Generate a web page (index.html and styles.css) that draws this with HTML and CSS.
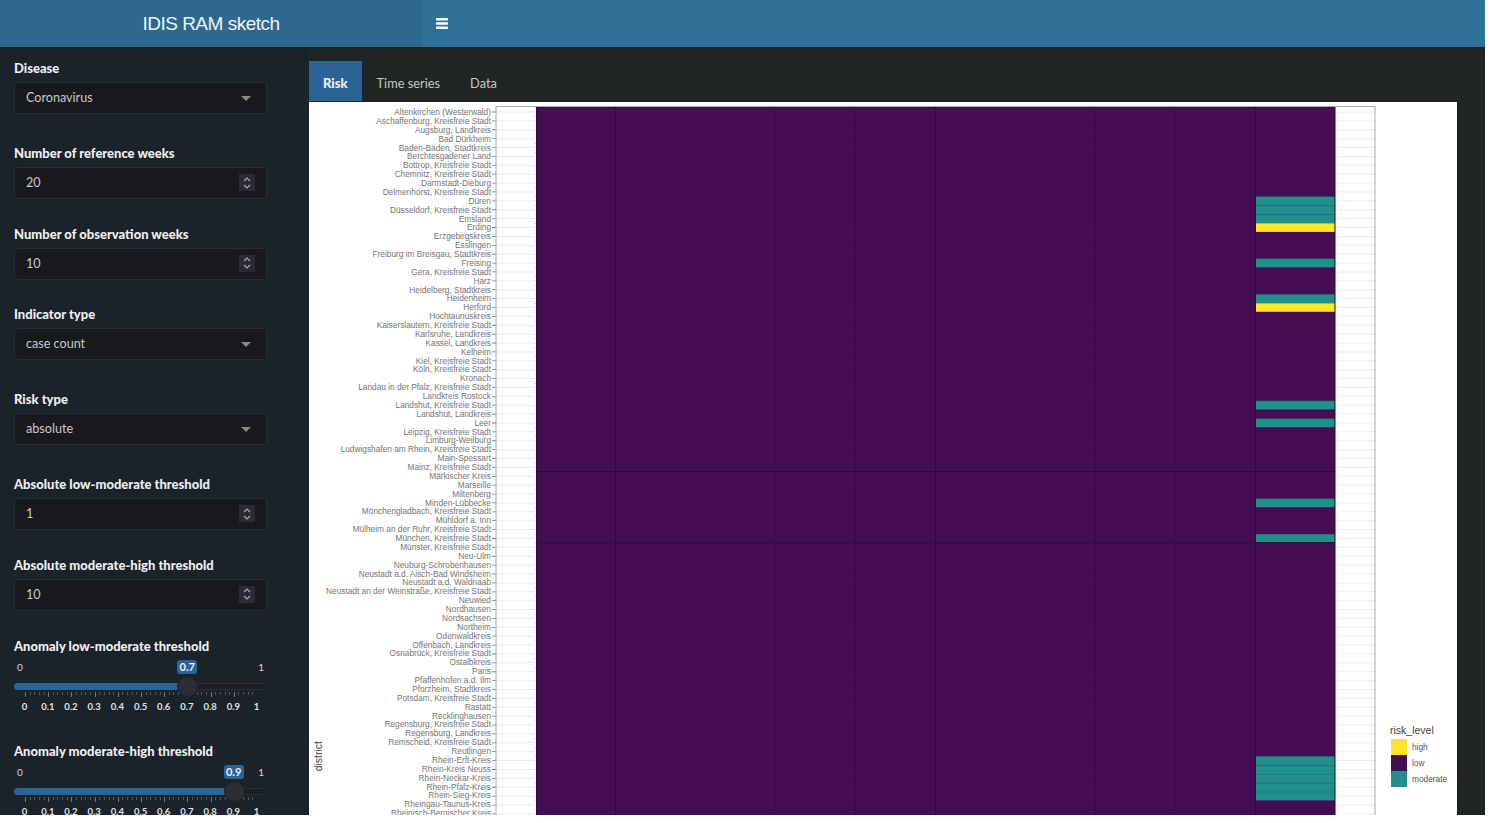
FILE: index.html
```html
<!DOCTYPE html>
<html lang="en">

<head>
    <meta charset="UTF-8">
    <meta name="viewport" content="width=device-width, initial-scale=1.0">
    <title>IDIS RAM sketch</title>
    <link rel="stylesheet" href="styles.css">
</head>

<body>
    <div class="app">
        <header class="topbar">
            <div class="logo">IDIS RAM sketch</div>
            <div class="toggle">
                <svg width="12" height="11" viewBox="0 0 12 11">
                    <rect y="0" width="12" height="2.4" rx="0.6" fill="#fff"/>
                    <rect y="4.3" width="12" height="2.4" rx="0.6" fill="#fff"/>
                    <rect y="8.6" width="12" height="2.4" rx="0.6" fill="#fff"/>
                </svg>
            </div>
        </header>

        <div class="layout">
            <aside class="sidebar">
                <div class="field field-select">
                    <label>Disease</label>
                    <div class="control">Coronavirus<span class="caret"></span></div>
                </div>
                <div class="field">
                    <label>Number of reference weeks</label>
                    <div class="control">20
                        <span class="spinner"><svg width="10" height="14" viewBox="0 0 10 14"><path d="M2 5l3-3 3 3M2 9l3 3 3-3" fill="none" stroke="#a9a9ad" stroke-width="1.2"/></svg></span>
                    </div>
                </div>
                <div class="field">
                    <label>Number of observation weeks</label>
                    <div class="control">10
                        <span class="spinner"><svg width="10" height="14" viewBox="0 0 10 14"><path d="M2 5l3-3 3 3M2 9l3 3 3-3" fill="none" stroke="#a9a9ad" stroke-width="1.2"/></svg></span>
                    </div>
                </div>
                <div class="field field-select">
                    <label>Indicator type</label>
                    <div class="control">case count<span class="caret"></span></div>
                </div>
                <div class="field field-select">
                    <label>Risk type</label>
                    <div class="control">absolute<span class="caret"></span></div>
                </div>
                <div class="field">
                    <label>Absolute low-moderate threshold</label>
                    <div class="control">1
                        <span class="spinner"><svg width="10" height="14" viewBox="0 0 10 14"><path d="M2 5l3-3 3 3M2 9l3 3 3-3" fill="none" stroke="#a9a9ad" stroke-width="1.2"/></svg></span>
                    </div>
                </div>
                <div class="field">
                    <label>Absolute moderate-high threshold</label>
                    <div class="control">10
                        <span class="spinner"><svg width="10" height="14" viewBox="0 0 10 14"><path d="M2 5l3-3 3 3M2 9l3 3 3-3" fill="none" stroke="#a9a9ad" stroke-width="1.2"/></svg></span>
                    </div>
                </div>

                <div class="field field-slider">
                    <label>Anomaly low-moderate threshold</label>
                    <div class="slider">
                        <div class="slider-ends"><span>0</span><span>1</span></div>
                        <span class="slider-value" style="left: 68.5%">0.7</span>
                        <div class="track"><div class="track-fill" style="width: 68.5%"></div></div>
                        <span class="handle" style="left: 68.5%"></span>
                        <div class="ticks"></div>
                        <div class="tick-labels">
                            <span>0</span><span>0.1</span><span>0.2</span><span>0.3</span><span>0.4</span><span>0.5</span><span>0.6</span><span>0.7</span><span>0.8</span><span>0.9</span><span>1</span>
                        </div>
                    </div>
                </div>
                <div class="field field-slider">
                    <label>Anomaly moderate-high threshold</label>
                    <div class="slider">
                        <div class="slider-ends"><span>0</span><span>1</span></div>
                        <span class="slider-value" style="left: 86.8%">0.9</span>
                        <div class="track"><div class="track-fill" style="width: 86.8%"></div></div>
                        <span class="handle" style="left: 86.8%"></span>
                        <div class="ticks"></div>
                        <div class="tick-labels">
                            <span>0</span><span>0.1</span><span>0.2</span><span>0.3</span><span>0.4</span><span>0.5</span><span>0.6</span><span>0.7</span><span>0.8</span><span>0.9</span><span>1</span>
                        </div>
                    </div>
                </div>
            </aside>

            <main class="content">
                <nav class="tabs">
                    <a class="tab active">Risk</a>
                    <a class="tab">Time series</a>
                    <a class="tab">Data</a>
                </nav>
                <div class="chart">
                    <div class="axis-title">district</div>
                    <div class="districts">
                        <div>Altenkirchen (Westerwald)</div>
                        <div>Aschaffenburg, Kreisfreie Stadt</div>
                        <div>Augsburg, Landkreis</div>
                        <div>Bad Dürkheim</div>
                        <div>Baden-Baden, Stadtkreis</div>
                        <div>Berchtesgadener Land</div>
                        <div>Bottrop, Kreisfreie Stadt</div>
                        <div>Chemnitz, Kreisfreie Stadt</div>
                        <div>Darmstadt-Dieburg</div>
                        <div>Delmenhorst, Kreisfreie Stadt</div>
                        <div>Düren</div>
                        <div>Düsseldorf, Kreisfreie Stadt</div>
                        <div>Emsland</div>
                        <div>Erding</div>
                        <div>Erzgebirgskreis</div>
                        <div>Esslingen</div>
                        <div>Freiburg im Breisgau, Stadtkreis</div>
                        <div>Freising</div>
                        <div>Gera, Kreisfreie Stadt</div>
                        <div>Harz</div>
                        <div>Heidelberg, Stadtkreis</div>
                        <div>Heidenheim</div>
                        <div>Herford</div>
                        <div>Hochtaunuskreis</div>
                        <div>Kaiserslautern, Kreisfreie Stadt</div>
                        <div>Karlsruhe, Landkreis</div>
                        <div>Kassel, Landkreis</div>
                        <div>Kelheim</div>
                        <div>Kiel, Kreisfreie Stadt</div>
                        <div>Köln, Kreisfreie Stadt</div>
                        <div>Kronach</div>
                        <div>Landau in der Pfalz, Kreisfreie Stadt</div>
                        <div>Landkreis Rostock</div>
                        <div>Landshut, Kreisfreie Stadt</div>
                        <div>Landshut, Landkreis</div>
                        <div>Leer</div>
                        <div>Leipzig, Kreisfreie Stadt</div>
                        <div>Limburg-Weilburg</div>
                        <div>Ludwigshafen am Rhein, Kreisfreie Stadt</div>
                        <div>Main-Spessart</div>
                        <div>Mainz, Kreisfreie Stadt</div>
                        <div>Märkischer Kreis</div>
                        <div>Marseille</div>
                        <div>Miltenberg</div>
                        <div>Minden-Lübbecke</div>
                        <div>Mönchengladbach, Kreisfreie Stadt</div>
                        <div>Mühldorf a. Inn</div>
                        <div>Mülheim an der Ruhr, Kreisfreie Stadt</div>
                        <div>München, Kreisfreie Stadt</div>
                        <div>Münster, Kreisfreie Stadt</div>
                        <div>Neu-Ulm</div>
                        <div>Neuburg-Schrobenhausen</div>
                        <div>Neustadt a.d. Aisch-Bad Windsheim</div>
                        <div>Neustadt a.d. Waldnaab</div>
                        <div>Neustadt an der Weinstraße, Kreisfreie Stadt</div>
                        <div>Neuwied</div>
                        <div>Nordhausen</div>
                        <div>Nordsachsen</div>
                        <div>Northeim</div>
                        <div>Odenwaldkreis</div>
                        <div>Offenbach, Landkreis</div>
                        <div>Osnabrück, Kreisfreie Stadt</div>
                        <div>Ostalbkreis</div>
                        <div>Paris</div>
                        <div>Pfaffenhofen a.d. Ilm</div>
                        <div>Pforzheim, Stadtkreis</div>
                        <div>Potsdam, Kreisfreie Stadt</div>
                        <div>Rastatt</div>
                        <div>Recklinghausen</div>
                        <div>Regensburg, Kreisfreie Stadt</div>
                        <div>Regensburg, Landkreis</div>
                        <div>Remscheid, Kreisfreie Stadt</div>
                        <div>Reutlingen</div>
                        <div>Rhein-Erft-Kreis</div>
                        <div>Rhein-Kreis Neuss</div>
                        <div>Rhein-Neckar-Kreis</div>
                        <div>Rhein-Pfalz-Kreis</div>
                        <div>Rhein-Sieg-Kreis</div>
                        <div>Rheingau-Taunus-Kreis</div>
                        <div>Rheinisch-Bergischer Kreis</div>
                    </div>

                    <!-- viewBox uses page coordinates, rows are 8.885 high starting at 107.5 -->
                    <svg class="heatmap" width="885" height="713" viewBox="492 102 885 713">
                        <line x1="516" x2="516" y1="111.5" y2="815" stroke="#ebebeb" stroke-width="40" stroke-dasharray="1 7.885"/>
                        <line x1="1355" x2="1355" y1="111.5" y2="815" stroke="#ebebeb" stroke-width="40" stroke-dasharray="1 7.885"/>
                        <line x1="494" x2="494" y1="111.6" y2="815" stroke="#7a7a7a" stroke-width="4" stroke-dasharray="0.8 8.085"/>

                        <rect x="536" y="107" width="799" height="708" fill="#440d54"/>

                        <rect x="1255" y="196.35" width="80" height="26.66" fill="#21908c"/>
                        <rect x="1255" y="223" width="80" height="8.9" fill="#fde725"/>
                        <rect x="1255" y="258.55" width="80" height="8.9" fill="#21908c"/>
                        <rect x="1255" y="294.1" width="80" height="8.9" fill="#21908c"/>
                        <rect x="1255" y="302.97" width="80" height="8.9" fill="#fde725"/>
                        <rect x="1255" y="400.7" width="80" height="8.9" fill="#21908c"/>
                        <rect x="1255" y="418.5" width="80" height="8.9" fill="#21908c"/>
                        <rect x="1255" y="498.44" width="80" height="8.9" fill="#21908c"/>
                        <rect x="1255" y="533.98" width="80" height="8.9" fill="#21908c"/>
                        <rect x="1255" y="756.1" width="80" height="44.4" fill="#21908c"/>

                        <!-- tile outlines -->
                        <line x1="935.5" x2="935.5" y1="107" y2="815" stroke="#30093f" stroke-width="1"/>
                        <line x1="615.5" x2="615.5" y1="107" y2="815" stroke="#30093f" stroke-width="1"/>
                        <line x1="1255.5" x2="1255.5" y1="107" y2="815" stroke="#30093f" stroke-width="1"/>
                        <line x1="855.5" x2="855.5" y1="107" y2="815" stroke="#3a0b4a" stroke-width="1"/>
                        <line x1="1095.5" x2="1095.5" y1="107" y2="815" stroke="#3a0b4a" stroke-width="1"/>
                        <line x1="775.5" x2="775.5" y1="107" y2="815" stroke="#3d0b4c" stroke-width="1"/>
                        <line x1="1175.5" x2="1175.5" y1="107" y2="815" stroke="#3d0b4c" stroke-width="1"/>
                        <line x1="935" x2="935" y1="107.5" y2="815" stroke="#28063a" stroke-opacity="0.3" stroke-width="800" stroke-dasharray="0.7 8.185"/>
                        <line x1="536" x2="1335" y1="471.5" y2="471.5" stroke="#2e0839"/>
                        <line x1="536" x2="1335" y1="542.5" y2="542.5" stroke="#340a41"/>
                        <line x1="536.5" x2="536.5" y1="107" y2="815" stroke="#2e0839"/>
                        <line x1="1335" x2="1335" y1="107" y2="815" stroke="#1c1024"/>

                        <rect x="496" y="106.5" width="879" height="709" fill="none" stroke="#a9a9a9"/>
                    </svg>

                    <div class="legend">
                        <div class="legend-title">risk_level</div>
                        <div class="legend-row"><span class="swatch swatch-high"></span>high</div>
                        <div class="legend-row"><span class="swatch swatch-low"></span>low</div>
                        <div class="legend-row"><span class="swatch swatch-moderate"></span>moderate</div>
                    </div>
                </div>
            </main>
        </div>
    </div>
</body>

</html>
```
FILE: styles.css
```css
body {
    margin: 0;
    background-color: #fff;
    font-family: 'Lato', 'Liberation Sans', sans-serif;
}

.app {
    width: 1485px;
    height: 815px;
    overflow: hidden;
    display: flex;
    flex-direction: column;
}

/* header */
.topbar {
    height: 47px;
    flex: none;
    display: flex;
    background-color: #2f7197;
}

.logo {
    width: 422px;
    background-color: #2d698e;
    color: #eef3f6;
    font-family: 'Liberation Sans', sans-serif;
    font-size: 19px;
    line-height: 48px;
    letter-spacing: -0.5px;
    text-align: center;
}

.toggle {
    padding: 18px 14px;
    line-height: 0;
}

.layout {
    flex: 1;
    min-height: 0;
    display: flex;
}

/* sidebar */
.sidebar {
    width: 309px;
    flex: none;
    box-sizing: border-box;
    padding: 13px 42px 0 14px;
    background-color: #1a2329;
    overflow: hidden;
}

.field {
    margin-bottom: 26.6px;
}

.field-select {
    margin-bottom: 31px;
}

.field label {
    display: block;
    height: 16px;
    margin-bottom: 6px;
    color: #eee;
    font-size: 13px;
    font-weight: 900;
    line-height: 16px;
}

.control {
    position: relative;
    height: 32px;
    box-sizing: border-box;
    padding-left: 11px;
    background-color: #17191c;
    border: 1px solid #272d33;
    border-radius: 3px;
    color: #c9c9c9;
    font-size: 12.6px;
    line-height: 30px;
}

.caret {
    position: absolute;
    top: 13px;
    right: 15px;
    border-top: 5px solid #8b8781;
    border-left: 5px solid transparent;
    border-right: 5px solid transparent;
}

.spinner {
    position: absolute;
    top: 6px;
    right: 11px;
    width: 16px;
    height: 17px;
    display: flex;
    justify-content: center;
    align-items: center;
    background-color: #2a2b36;
}

/* sliders */
.field-slider {
    margin-bottom: 0;
    padding-top: 1px;
    height: 104px;
}

.slider {
    position: relative;
    height: 60px;
    color: #d5d5d5;
    font-size: 10px;
}

.slider-ends {
    display: flex;
    justify-content: space-between;
    padding: 0 3px;
    height: 15px;
    line-height: 14px;
}

.slider-value {
    position: absolute;
    top: 0;
    width: 20px;
    margin-left: -10px;
    background-color: #2a6496;
    border-radius: 3px;
    color: #eee;
    font-size: 11px;
    font-weight: 700;
    line-height: 14px;
    text-align: center;
}

.track {
    height: 7px;
    margin-top: 8px;
    background-color: #1c1f22;
    border: 1px solid #2b2f33;
    box-sizing: border-box;
    border-radius: 4px;
}

.track-fill {
    height: 7px;
    margin: -1px;
    border-radius: 4px 0 0 4px;
    background-color: #2b6596;
}

.handle {
    position: absolute;
    top: 16px;
    width: 21px;
    height: 21px;
    margin-left: -10px;
    border-radius: 50%;
    background-color: #2b2e32;
    border: 1px solid #1d2024;
    box-sizing: border-box;
}

.ticks {
    height: 5px;
    margin: 2px 10px 0 11px;
    background-image:
        repeating-linear-gradient(to right, #777 0 1px, transparent 1px 23.2px),
        repeating-linear-gradient(to right, #555 0 1px, transparent 1px 4.64px);
    background-size: 100% 5px, 100% 3px;
    background-repeat: no-repeat;
}

.tick-labels {
    display: flex;
    margin: 4px -10px 0 -1px;
    color: #e2e2e2;
    font-size: 9.5px;
    font-weight: 700;
    line-height: 12px;
}

.tick-labels span {
    width: 23.2px;
    flex: none;
    text-align: center;
}

/* main area */
.content {
    flex: 1;
    min-width: 0;
    box-sizing: border-box;
    padding: 14px 28px 0 0;
    display: flex;
    flex-direction: column;
    background-color: #1f2424;
}

.tabs {
    display: flex;
    height: 41px;
    flex: none;
}

.tab {
    padding: 0 15px;
    color: #c8c8c8;
    font-size: 12.8px;
    line-height: 44px;
    height: 40px;
}

.tab.active {
    padding: 0 14px;
    background-color: #2a6496;
    color: #eee;
    font-size: 13px;
    font-weight: 900;
}

.chart {
    flex: 1;
    min-height: 0;
    display: flex;
    overflow: hidden;
    background-color: #fff;
    font-family: 'Liberation Sans', sans-serif;
}

.axis-title {
    width: 14px;
    margin-left: 2px;
    margin-bottom: 44px;
    align-self: flex-end;
    writing-mode: vertical-rl;
    transform: rotate(180deg);
    color: #444;
    font-size: 10.5px;
    line-height: 14px;
}

.districts {
    width: 166px;
    flex: none;
    padding-top: 6px;
    margin-right: 1px;
    color: #757575;
    font-size: 8.3px;
    text-align: right;
    white-space: nowrap;
}

.districts div {
    height: 8.885px;
    line-height: 8.885px;
}

.heatmap {
    flex: none;
    display: block;
}

.legend {
    align-self: flex-end;
    margin-left: 13px;
    margin-bottom: 28px;
    color: #555;
    font-size: 8.3px;
}

.legend-title {
    color: #444;
    font-size: 10.5px;
    line-height: 14px;
    margin-bottom: 2px;
}

.legend-row {
    display: flex;
    align-items: center;
    height: 16px;
    margin-left: 1px;
}

.swatch {
    width: 16px;
    height: 16px;
    margin-right: 5px;
}

.swatch-high {
    background-color: #fde725;
}

.swatch-low {
    background-color: #440d54;
}

.swatch-moderate {
    background-color: #21908c;
}
```
